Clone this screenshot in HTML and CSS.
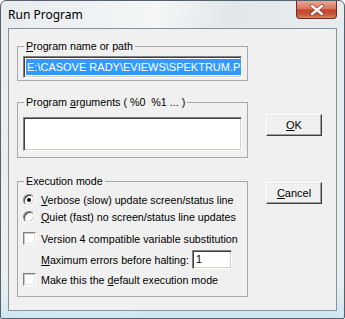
FILE: index.html
```html
<!DOCTYPE html>
<html lang="en">

<head>
    <meta charset="UTF-8">
    <meta name="viewport" content="width=device-width, initial-scale=1.0">
    <title>Run Program</title>
    <link rel="stylesheet" href="styles.css">
</head>

<body>
    <div class="window">
        <div class="titlebar">
            <span class="title">Run Program</span>
            <div class="close">
                <svg width="16" height="12" viewBox="0 0 16 12">
                    <path d="M3 2 L13 10 M13 2 L3 10" stroke="#5a1a10" stroke-width="4" stroke-linecap="round" opacity="0.5" />
                    <path d="M3 2 L13 10 M13 2 L3 10" stroke="#ffffff" stroke-width="2.4" stroke-linecap="round" />
                </svg>
            </div>
        </div>
        <div class="client">
            <div class="groups">
                <fieldset class="group group-path">
                    <legend><u>P</u>rogram name or path</legend>
                    <div class="edit edit-path"><span class="sel">E:\CASOVE RADY\EVIEWS\SPEKTRUM.PRG</span></div>
                </fieldset>

                <fieldset class="group group-args">
                    <legend>Program <u>a</u>rguments ( %0&nbsp; %1 ... )</legend>
                    <div class="edit edit-args"></div>
                </fieldset>

                <fieldset class="group group-mode">
                    <legend>Execution mode</legend>
                    <div class="row">
                        <span class="radio checked"></span>
                        <span><u>V</u>erbose (slow) update screen/status line</span>
                    </div>
                    <div class="row">
                        <span class="radio"></span>
                        <span><u>Q</u>uiet (fast) no screen/status line updates</span>
                    </div>
                    <div class="row row-gap">
                        <span class="check"></span>
                        <span>Version 4 compatible variable substitution</span>
                    </div>
                    <div class="row row-errors">
                        <span class="errors-label"><u>M</u>aximum errors before halting:</span>
                        <div class="edit edit-errors">1</div>
                    </div>
                    <div class="row row-last">
                        <span class="check"></span>
                        <span>Make this the <u>d</u>efault execution mode</span>
                    </div>
                </fieldset>
            </div>
            <div class="actions">
                <button class="btn"><u>O</u>K</button>
                <button class="btn btn-cancel"><u>C</u>ancel</button>
            </div>
        </div>
    </div>
</body>

</html>
```

FILE: styles.css
```css
body {
    margin: 0;
    font-family: "Liberation Sans", Arial, sans-serif;
    font-size: 10.7px;
    color: #000000;
}

.window {
    width: 345px;
    height: 319px;
    box-sizing: border-box;
    border: 1px solid #56616c;
    border-radius: 6px 6px 2px 2px;
    display: flex;
    flex-direction: column;
    background:
        linear-gradient(to bottom, rgba(255, 255, 255, 0) 88%, #cfe7f0 100%),
        linear-gradient(100deg, #e7ecef 0%, #f4f6f7 40%, #e1e7eb 58%, #ebeff2 100%);
}

.titlebar {
    height: 27px;
    display: flex;
    align-items: flex-start;
}

.title {
    font-family: "Noto Sans", "DejaVu Sans", sans-serif;
    font-size: 12px;
    padding: 5px 0 0 7px;
}

.close {
    margin-left: auto;
    margin-right: 7px;
    width: 41px;
    height: 18px;
    box-sizing: border-box;
    border: 1px solid #6e2a1e;
    border-top: none;
    border-radius: 0 0 4px 4px;
    background: linear-gradient(to bottom, #eaa897 0%, #d8765f 45%, #c2452b 52%, #c8563b 80%, #dc866a 100%);
    display: flex;
    align-items: center;
    justify-content: center;
}

.client {
    flex: 1;
    margin: 0 7px 7px 7px;
    border: 1px solid #86929d;
    background-color: #f0f0f0;
    display: flex;
    align-items: flex-start;
}

.groups {
    width: 231px;
    flex-shrink: 0;
    display: flex;
    flex-direction: column;
    margin-left: 8px;
}

.group {
    width: 231px;
    min-inline-size: 0;
    box-sizing: border-box;
    margin: 0;
    border: 1px solid #a8a8a8;
    padding: 3px 5px 2px 5px;
}

.group legend {
    padding: 0 2px;
    margin-left: 1px;
    line-height: 13px;
}

.group-path {
    margin-top: 11px;
}

.group-args {
    margin-top: 15px;
    padding-top: 8px;
    padding-bottom: 6px;
}

.group-mode {
    margin-top: 17px;
    padding-top: 3px;
    padding-bottom: 8px;
}

.edit {
    box-sizing: border-box;
    background-color: #ffffff;
    border: 1px solid;
    border-color: #808080 #ffffff #ffffff #808080;
    box-shadow: inset 1px 1px #404040, inset -1px -1px #d4d0c8;
    overflow: hidden;
    white-space: nowrap;
}

.edit-path {
    width: 219px;
    height: 22px;
    padding: 2px 0 0 2px;
}

.sel {
    display: inline-block;
    background-color: #3399ff;
    color: #ffffff;
    font-size: 11px;
    line-height: 16px;
    padding: 0 1px;
}

.edit-args {
    height: 34px;
}

.row {
    height: 17px;
    display: flex;
    align-items: center;
    white-space: nowrap;
}

.row-gap {
    margin-top: 5px;
}

.row-errors {
    height: 19px;
    margin-top: 3px;
    padding-left: 18px;
}

.row-last {
    margin-top: 2px;
}

.errors-label {
    flex-shrink: 0;
}

.edit-errors {
    width: 40px;
    height: 19px;
    flex-shrink: 0;
    margin: 0 10px 0 auto;
    padding: 2px 0 0 3px;
}

.radio {
    width: 12px;
    height: 12px;
    flex-shrink: 0;
    box-sizing: border-box;
    margin: 0 6px 0 0;
    border-radius: 50%;
    border: 1px solid;
    border-color: #808080 #ffffff #ffffff #808080;
    box-shadow: inset 1px 1px #404040, inset -1px -1px #d4d0c8;
    background-color: #ffffff;
    display: flex;
    align-items: center;
    justify-content: center;
}

.radio.checked::after {
    content: "";
    width: 4px;
    height: 4px;
    border-radius: 50%;
    background-color: #000000;
}

.check {
    width: 13px;
    height: 13px;
    flex-shrink: 0;
    box-sizing: border-box;
    margin: 0 5px 0 0;
    border: 1px solid;
    border-color: #808080 #ffffff #ffffff #808080;
    box-shadow: inset 1px 1px #c8c8c8, inset -1px -1px #e4e4e4;
    background-color: #ffffff;
}

.actions {
    display: flex;
    flex-direction: column;
    margin-left: 18px;
    padding-top: 85px;
}

.btn {
    width: 56px;
    height: 22px;
    box-sizing: border-box;
    padding: 0;
    font-family: "Liberation Sans", Arial, sans-serif;
    font-size: 11px;
    color: #000000;
    background-color: #f0f0f0;
    border: 1px solid;
    border-color: #ffffff #404040 #404040 #ffffff;
    box-shadow: inset -1px -1px #a0a0a0, inset 1px 1px #e8e8e8;
}

.btn-cancel {
    margin-top: 46px;
}
```
